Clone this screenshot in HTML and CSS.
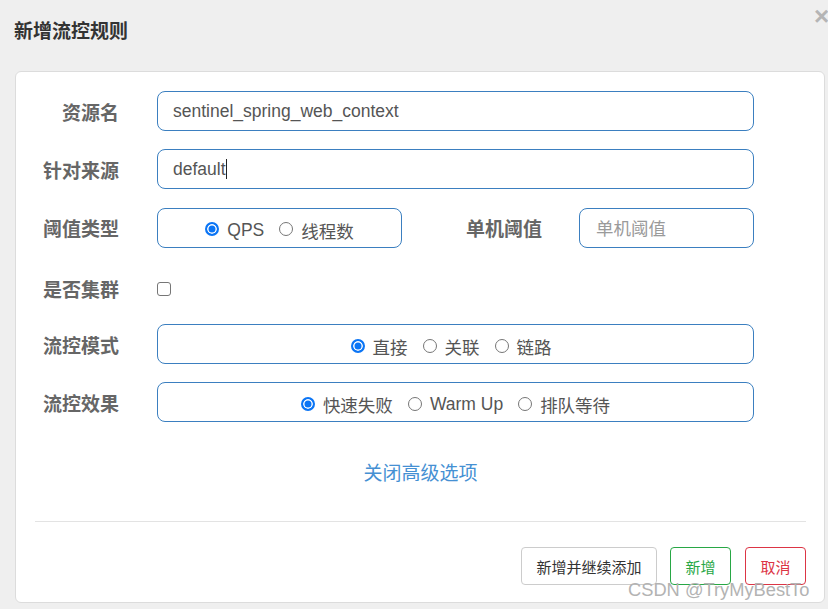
FILE: index.html
```html
<!DOCTYPE html>
<html lang="zh">
<head>
<meta charset="utf-8">
<title>新增流控规则</title>
<link rel="stylesheet" href="styles.css">
</head>
<body>
<div class="dialog">
  <div class="header">
    <h4 class="title">新增流控规则</h4>
    <span class="close">×</span>
  </div>
  <div class="panel">
    <div class="form">
      <div class="row">
        <label class="label">资源名</label>
        <div class="input wide">sentinel_spring_web_context</div>
      </div>
      <div class="row">
        <label class="label">针对来源</label>
        <div class="input wide">default<span class="caret"></span></div>
      </div>
      <div class="row">
        <label class="label">阈值类型</label>
        <div class="control split">
          <div class="radio-box half">
            <label class="opt"><input type="radio" name="grade" checked><span>QPS</span></label>
            <label class="opt"><input type="radio" name="grade"><span>线程数</span></label>
          </div>
          <label class="label sub">单机阈值</label>
          <div class="input small placeholder">单机阈值</div>
        </div>
      </div>
      <div class="row check-row">
        <label class="label">是否集群</label>
        <div class="control"><input type="checkbox" class="check"></div>
      </div>
      <div class="row">
        <label class="label">流控模式</label>
        <div class="radio-box wide strategy">
          <label class="opt"><input type="radio" name="strategy" checked><span>直接</span></label>
          <label class="opt"><input type="radio" name="strategy"><span>关联</span></label>
          <label class="opt"><input type="radio" name="strategy"><span>链路</span></label>
        </div>
      </div>
      <div class="row">
        <label class="label">流控效果</label>
        <div class="radio-box wide">
          <label class="opt"><input type="radio" name="behavior" checked><span>快速失败</span></label>
          <label class="opt"><input type="radio" name="behavior"><span>Warm Up</span></label>
          <label class="opt"><input type="radio" name="behavior"><span>排队等待</span></label>
        </div>
      </div>
    </div>
    <div class="advanced"><a class="link">关闭高级选项</a></div>
    <div class="separator"></div>
    <div class="footer">
      <button class="btn">新增并继续添加</button>
      <button class="btn btn-ok">新增</button>
      <button class="btn btn-cancel">取消</button>
    </div>
  </div>
  <div class="watermark">CSDN @TryMyBestTo</div>
</div>
</body>
</html>
```
FILE: styles.css
```css
html, body {
  margin: 0;
  padding: 0;
}
body {
  background: #efefef;
  font-family: "Liberation Sans", "Noto Sans CJK SC", sans-serif;
  color: #555;
  width: 828px;
  height: 609px;
  overflow: hidden;
}
.dialog {
  position: relative;
  height: 609px;
  padding-left: 15px;
}
.header {
  height: 71px;
  box-sizing: border-box;
  padding-top: 21px;
}
.title {
  margin: 0 0 0 -1px;
  font-size: 19px;
  line-height: 22px;
  font-weight: bold;
  color: #333;
}
.close {
  position: absolute;
  left: 814px;
  top: 3px;
  font-size: 26px;
  line-height: 26px;
  font-weight: bold;
  color: #b5b5b5;
}
.panel {
  width: 810px;
  height: 532px;
  box-sizing: border-box;
  background: #fff;
  border: 1px solid #dcdcdc;
  border-radius: 6px;
  padding: 19px 18px 0 19px;
}
.form {
  display: flex;
  flex-direction: column;
  gap: 18.3px;
}
.row {
  display: flex;
  align-items: center;
  height: 40px;
}
.label {
  width: 84px;
  margin-right: 38px;
  text-align: right;
  font-size: 19px;
  font-weight: bold;
  color: #666;
  flex: none;
}
.input {
  box-sizing: border-box;
  height: 40px;
  border: 1px solid #3b7fc0;
  border-radius: 8px;
  padding-left: 15px;
  display: flex;
  align-items: center;
  font-size: 17.5px;
  color: #555;
}
.wide {
  width: 597px;
}
.caret {
  display: inline-block;
  width: 1px;
  height: 20px;
  background: #222;
}
.control {
  display: flex;
  align-items: center;
  width: 597px;
}
.radio-box {
  box-sizing: border-box;
  height: 40px;
  border: 1px solid #3b7fc0;
  border-radius: 8px;
  padding-top: 3px;
  display: flex;
  align-items: center;
  justify-content: center;
  gap: 15px;
  font-size: 17.5px;
  color: #555;
}
.strategy {
  padding-right: 9px;
}
.half {
  width: 245px;
}
.split .sub {
  width: auto;
  flex: 1;
  margin-right: 37px;
}
.small {
  width: 175px;
}
.placeholder {
  color: #9a9a9a;
  padding-left: 16px;
}
.opt {
  display: flex;
  align-items: center;
}
.opt span {
  position: relative;
  top: 1px;
}
.opt input {
  appearance: none;
  -webkit-appearance: none;
  box-sizing: border-box;
  width: 14px;
  height: 14px;
  margin: 0 8px 0 0;
  border: 1px solid #767676;
  border-radius: 50%;
  background: #fff;
}
.opt input:checked {
  border: 2px solid #0b75f5;
  background: #0b75f5;
  box-shadow: inset 0 0 0 1.5px #fff;
}
.check-row {
  box-sizing: border-box;
  padding-top: 6px;
}
.check {
  appearance: none;
  -webkit-appearance: none;
  box-sizing: border-box;
  width: 14px;
  height: 14px;
  margin: 0;
  border: 1.5px solid #767676;
  border-radius: 3px;
  background: #fff;
}
.advanced {
  margin-top: 39px;
  text-align: center;
  line-height: 26px;
}
.link {
  font-size: 19px;
  color: #4590d3;
  text-decoration: none;
  cursor: pointer;
}
.separator {
  margin-top: 33px;
  height: 1px;
  background: #e3e3e3;
}
.footer {
  margin-top: 25px;
  display: flex;
  justify-content: flex-end;
  gap: 13px;
}
.btn {
  height: 38px;
  box-sizing: border-box;
  padding: 0 14.5px;
  background: #fff;
  border: 1px solid #ccc;
  border-radius: 4px;
  font-family: "Liberation Sans", "Noto Sans CJK SC", sans-serif;
  font-size: 15px;
  color: #333;
}
.btn-ok {
  border-color: #28a745;
  color: #28a745;
}
.btn-cancel {
  border-color: #dc3545;
  color: #dc3545;
  margin-left: 1px;
}
.watermark {
  position: absolute;
  left: 628px;
  top: 579px;
  font-size: 18.3px;
  line-height: 22px;
  color: #b3b3b3;
  white-space: nowrap;
}
```
